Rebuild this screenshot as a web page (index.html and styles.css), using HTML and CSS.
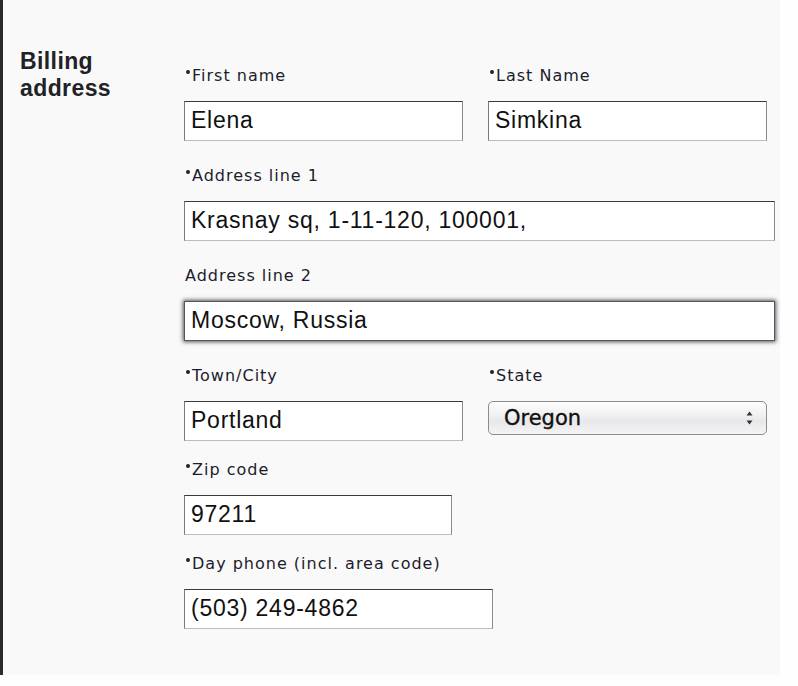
FILE: index.html
```html
<!DOCTYPE html>
<html lang="en">
<head>
<meta charset="utf-8">
<title>Billing address</title>
<link rel="stylesheet" href="styles.css">
</head>
<body>
<div class="panel">
  <h2 class="panel-title">Billing<br>address</h2>
  <form class="fields">
    <div class="row">
      <div class="field">
        <label class="label"><span class="req"></span>First name</label>
        <input class="input w-half" type="text" value="Elena">
      </div>
      <div class="field">
        <label class="label"><span class="req"></span>Last Name</label>
        <input class="input w-half" type="text" value="Simkina">
      </div>
    </div>
    <div class="row">
      <div class="field">
        <label class="label"><span class="req"></span>Address line 1</label>
        <input class="input w-full" type="text" value="Krasnay sq, 1-11-120, 100001,">
      </div>
    </div>
    <div class="row">
      <div class="field">
        <label class="label">Address line 2</label>
        <input class="input w-full input--focus" type="text" value="Moscow, Russia">
      </div>
    </div>
    <div class="row row--tight">
      <div class="field">
        <label class="label"><span class="req"></span>Town/City</label>
        <input class="input w-half" type="text" value="Portland">
      </div>
      <div class="field">
        <label class="label"><span class="req"></span>State</label>
        <div class="select-wrap">
          <select class="select">
            <option>Oregon</option>
          </select>
          <svg class="select-arrows" width="7" height="14" viewBox="0 0 7 14" aria-hidden="true">
            <path d="M3.5 0.5 L6.5 4.5 L0.5 4.5 Z" fill="#333"/>
            <path d="M3.5 13.5 L6.5 9.5 L0.5 9.5 Z" fill="#333"/>
          </svg>
        </div>
      </div>
    </div>
    <div class="row row--tight">
      <div class="field">
        <label class="label"><span class="req"></span>Zip code</label>
        <input class="input w-zip" type="text" value="97211">
      </div>
    </div>
    <div class="row">
      <div class="field">
        <label class="label"><span class="req"></span>Day phone (incl. area code)</label>
        <input class="input w-phone" type="text" value="(503) 249-4862">
      </div>
    </div>
  </form>
</div>
</body>
</html>
```

FILE: styles.css
```css
html, body {
  margin: 0;
  padding: 0;
  background: #fefefe;
}

.panel {
  display: flex;
  width: 780px;
  min-height: 675px;
  box-sizing: border-box;
  border-left: 3px solid #2b2b2b;
  background: #f9f9fa;
}

.panel-title {
  margin: 0;
  width: 181px;
  box-sizing: border-box;
  padding: 48px 0 0 17px;
  font-family: "Liberation Sans", Arial, sans-serif;
  font-weight: bold;
  font-size: 23px;
  line-height: 27px;
  letter-spacing: 0.4px;
  color: #222226;
}

.fields {
  margin: 0;
  padding-top: 66px;
  display: flex;
  flex-direction: column;
}

.row {
  display: flex;
  gap: 25px;
  margin-bottom: 25px;
}

.row--tight {
  margin-bottom: 19px;
}

.field {
  display: flex;
  flex-direction: column;
}

.label {
  display: block;
  height: 20px;
  margin-bottom: 15px;
  padding-left: 1px;
  font-family: "DejaVu Sans", Verdana, sans-serif;
  font-size: 16px;
  line-height: 20px;
  letter-spacing: 1px;
  color: #1c1c2c;
}

.req {
  display: inline-block;
  width: 4px;
  height: 4px;
  border-radius: 50%;
  background: #222;
  vertical-align: top;
  margin: 4px 2px 0 1px;
}

.input {
  height: 40px;
  box-sizing: border-box;
  margin: 0;
  padding: 0 6px 2px 6px;
  border: 1px solid;
  border-color: #3a3a3a #8a8a8a #bdbdbd #7a7a7a;
  border-radius: 0;
  background: #ffffff;
  font-family: "Liberation Sans", Arial, sans-serif;
  font-size: 23px;
  letter-spacing: 0.75px;
  color: #111111;
  outline: none;
}

.input--focus {
  border-color: #55555c;
  box-shadow: 0 0 4px 1px rgba(40, 40, 50, 0.8);
}

.w-half { width: 279px; }
.w-full { width: 591px; }
.w-zip { width: 268px; }
.w-phone { width: 309px; }

.select-wrap {
  position: relative;
  width: 279px;
}

.select {
  -webkit-appearance: none;
  appearance: none;
  display: block;
  width: 279px;
  height: 34px;
  box-sizing: border-box;
  margin: 0;
  padding: 0 0 0 15px;
  border: 1px solid #8c8c8c;
  border-radius: 5px;
  background: linear-gradient(#fdfdfd 0%, #f1f1f2 40%, #e8e8ea 60%, #f4f4f5 100%);
  font-family: "DejaVu Sans", Verdana, sans-serif;
  font-size: 21px;
  color: #111111;
  -webkit-text-stroke: 0.35px #111111;
  outline: none;
}

.select-arrows {
  position: absolute;
  right: 14px;
  top: 10px;
}
```
